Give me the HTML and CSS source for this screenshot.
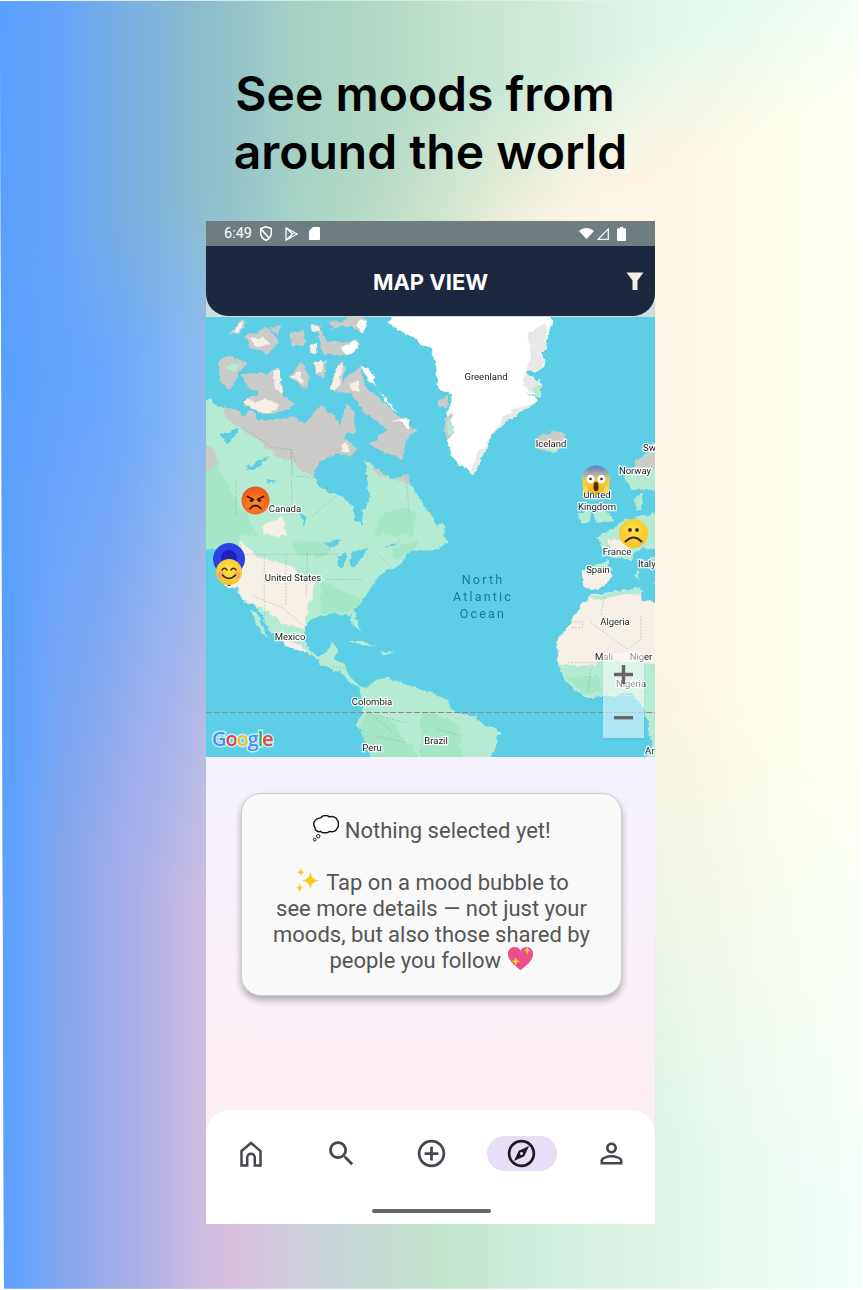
FILE: index.html
```html
<!DOCTYPE html>
<html lang="en">
<head>
<meta charset="utf-8">
<title>See moods from around the world</title>
<link rel="stylesheet" href="styles.css">
</head>
<body>
<main class="stage">
  <h1 class="headline"><span class="line-one">See moods from</span><span class="line-two">around the world</span></h1>
  <section class="phone">
    <div class="status">
      <div class="status-left">
        <span class="clock">6:49</span>
        <svg class="st-shield" viewBox="0 0 12 15"><path d="M6 .7 11.300 2.600V7c0 3.200-2.300 5.900-5.300 7.300C3 12.900.7 10.200.7 7V2.600z M1.500 3.500 9.500 12.500" fill="none" stroke="#fff" stroke-width="1.500"/></svg>
        <svg class="st-play" viewBox="0 0 13 14"><path d="M1 .8 12.200 7 1 13.200z M1 .8 7.500 7 1 13.200 M3 12 7.500 7 9.500 5.400" fill="none" stroke="#fff" stroke-width="1.300" stroke-linejoin="round"/></svg>
        <svg class="st-sd" viewBox="0 0 11 13"><path d="M4 0h6a1 1 0 0 1 1 1v11a1 1 0 0 1-1 1H1a1 1 0 0 1-1-1V4z" fill="#fff"/></svg>
      </div>
      <div class="status-right">
        <svg class="st-wifi" viewBox="0 0 15 11"><path d="M7.500 11 0 3C4.200-1 10.800-1 15 3z" fill="#fff"/></svg>
        <svg class="st-sig" viewBox="0 0 12 12"><path d="M.9 11.300 11.300.9V11.300z" fill="none" stroke="#fff" stroke-width="1.200"/></svg>
        <svg class="st-bat" viewBox="0 0 9 14"><path d="M3 0h3v1.300h2a1 1 0 0 1 1 1V13a1 1 0 0 1-1 1H1a1 1 0 0 1-1-1V2.300a1 1 0 0 1 1-1h2z" fill="#fff"/></svg>
      </div>
    </div>

    <div class="topbar-wrap">
      <header class="topbar">
        <span class="topbar-title">MAP VIEW</span>
        <svg class="filter" viewBox="0 0 18 18"><path d="M0.500 0.500H17.500L11.500 8.500V18H6.500V8.500z" fill="#f3efe6"/></svg>
      </header>
    </div>

    <div class="map">
      <svg class="map-art" viewBox="206 317 449 440" preserveAspectRatio="none">
        <defs>
          <filter id="rough" filterUnits="userSpaceOnUse" x="170" y="280" width="520" height="510">
            <feTurbulence type="fractalNoise" baseFrequency=".11" numOctaves="3" seed="7"/>
            <feDisplacementMap in="SourceGraphic" scale="7" xChannelSelector="R" yChannelSelector="G"/>
          </filter>
          <radialGradient id="angry" cx="50%" cy="62%" r="58%"><stop offset="0" stop-color="#fb8d25"/><stop offset=".75" stop-color="#f4651c"/><stop offset="1" stop-color="#ea5a2a"/></radialGradient>
          <linearGradient id="shock" x1="0" y1="0" x2="0" y2="1"><stop offset="0" stop-color="#5a78d4"/><stop offset=".4" stop-color="#c2c08e"/><stop offset=".55" stop-color="#fcc934"/><stop offset="1" stop-color="#f9b122"/></linearGradient>
          <radialGradient id="yellow" cx="50%" cy="40%" r="65%"><stop offset="0" stop-color="#ffe24c"/><stop offset="1" stop-color="#f9bf1e"/></radialGradient>
        </defs>
        <rect class="sea" x="206" y="317" width="449" height="440"/>

        <g filter="url(#rough)">
        <!-- Arctic Canada + northern North America, zoom 2 coordinates -->
        <g transform="translate(206 316) scale(.3333)">
          <path class="land" d="M-30 250 12 248 32 270 62 276 110 300 150 330 190 350 215 385 250 400 262 415 330 430 325 480 335 505 400 530 440 565 465 630 475 560 490 530 480 460 480 435 530 470 560 490 600 480 620 510 675 600 700 700H-30z"/>
          <path class="land-deep" d="M-30 400 30 420 60 500 120 590 170 700H-30z"/>
          <path class="land-deep" d="M520 600 600 570 675 640V700H500z"/>
          <path class="rock" d="M-30 375 22 395 30 440 12 460-30 440z"/>
          <path class="rock" d="M48 268 100 288 112 300 135 285 170 318 220 310 262 300 300 320 340 270 380 292 402 330 420 268 445 290 450 350 420 355 403 392 420 420 470 432 520 465 560 490 600 480 615 505 580 495 520 480 480 435 395 412 340 440 325 480 290 470 270 440 225 425 190 400 150 370 110 340 60 310z"/>
          <path class="rock" d="M40 130 75 120 125 140 100 170 70 222 40 190z"/>
          <path class="land" d="M60 150 80 140 100 150 80 170z"/>
          <path class="rock" d="M100 180 150 170 185 172 215 150 235 240 265 265 235 285 170 295 115 270 120 250 160 232 130 215z"/>
          <path class="sand" d="M115 256 180 250 215 262 215 282 170 290 130 276z"/>
          <path class="sand" d="M200 165 218 158 232 235 210 215z"/>
          <path class="rock" d="M250 180 280 140 300 150 310 215 280 210z"/>
          <path class="sand" d="M255 178 280 165 295 195 285 205z"/>
          <path class="rock" d="M370 215 400 145 420 150 410 200 460 150 480 210 510 240 580 300 632 340 600 375 590 432 520 400 482 380 510 370 540 340 500 310 470 280 430 230 390 225z"/>
          <path class="sand" d="M372 215 395 150 412 145 400 210 385 222z"/>
          <path class="sand" d="M430 200 455 195 460 225 440 225z"/>
          <path class="snow" d="M460 150 490 155 510 220 540 250 575 290 545 265 500 205z"/>
          <path class="snow" d="M555 315 615 310 605 345 585 320z"/>
          <path class="rock" d="M310 25 340 28 355 70 400 80 450 70 465 100 410 118 350 115 340 60z"/>
          <path class="sand" d="M315 25 335 28 345 50 325 50z"/>
          <path class="snow" d="M405 95 445 72 462 95 420 118z"/>
          <path class="rock" d="M70 60 110 10 125 20 100 50z"/>
          <path class="sand" d="M82 48 108 18 112 28 95 50z"/>
          <path class="rock" d="M115 60 180 35 220 70 190 110 130 100z"/>
          <path class="sand" d="M130 70 170 60 190 85 150 92z"/>
          <path class="rock" d="M250 50 300 40 290 90 260 90z"/>
          <path class="rock" d="M370 40 440 -5 482 10 470 52 430 30z"/>
          <path class="snow" d="M448 25 482 12 470 52z"/>
          <path class="sand" d="M310 90 330 80 335 110 315 110z"/>
          <path class="rock" d="M190 35 225 30 218 60z"/>
          <path class="rock" d="M360 20 400 10 395 35z"/>
          <path class="rock" d="M320 135 360 135 355 185 335 180z"/>
          <path class="sand" d="M322 138 355 135 345 165 332 172z"/>
          <path class="rock" d="M400 375 415 365 455 405 430 418 400 410z"/>
          <path class="sand" d="M408 390 420 378 432 405 410 408z"/>
          <path class="sea" d="M40 355 95 335 85 365 62 382z"/>
          <path class="sea" d="M112 460 185 425 150 460 125 465 132 445z"/>
          <path class="sea" d="M180 495 210 490 190 505z"/>
          <path class="sea" d="M325 480 340 440 370 422 395 412 440 440 475 450 480 470 470 500 495 540 470 590 468 628 448 610 440 570 405 540 370 530 335 505z"/>
          <path class="sea" d="M280 590 305 600 295 625z"/>
          <path class="sand" d="M170 625 230 600 260 700H180z"/>
        </g>

        <!-- United States to Colombia, zoom 4 coordinates -->
        <g transform="translate(206 536) scale(.3333)">
          <path class="land" d="M100 -2H640L640 40 600 50 590 80 530 110 510 130 500 150 470 190 440 225 455 260 462 285 445 270 430 235 350 235 320 245 300 275 295 310 310 345 340 365 385 325 395 340 385 370 420 385 430 420 460 450 480 455 520 425 600 440 700 480V700H515L500 640 470 600 455 570 470 510 460 455 430 440 405 415 350 385 300 350 240 330 225 310 200 290 155 215 122 205 90 160 60 145 100 90z"/>
          <path class="land" d="M630 -80 675 -60 700 -20 722 22 690 36 640 42 620 10z"/>
          <path class="land" d="M680 -30 715 -40 720 -5 695 0z"/>
          <path class="land-deep" d="M505 700 470 600 460 570 490 520 560 560 620 640 660 700z"/>
          <path class="land-deep" d="M260 10 380 25 360 60 270 55z"/>
          <path class="land-deep" d="M345 135 470 190 430 228 345 232z"/>
          <path class="land-deep" d="M560 40 640 10 620 45 570 70z"/>
          <path class="sand" d="M105 15 150 60 190 72 262 90 282 130 330 132 312 190 302 232 300 280 258 270 225 262 190 228 165 215 125 205 92 160 60 145 100 90z"/>
          <path class="sand" d="M225 310 290 330 300 350 240 330z"/>
          <path class="land" d="M135 222 150 225 187 305 165 290z"/>
          <path class="sea" d="M390 60 422 48 412 98 396 90z"/>
          <path class="sea" d="M350 24 410 10 390 30z"/>
          <path class="sea" d="M440 48 482 30 470 68 440 95 430 70z"/>
          <path class="sea" d="M530 40 590 5 560 30z"/>
          <path class="land" d="M425 315 470 315 512 337 470 327z"/>
          <path class="land" d="M525 345 567 350 530 356z"/>
        </g>

        <!-- Greenland, Iceland, Britain, Scandinavia, zoom 3 coordinates -->
        <g transform="translate(431 316) scale(.3333)">
          <path class="snow" d="M-110 -20H350L362 25 345 90 330 110 345 150 310 170 330 200 330 245 290 225 325 255 235 310 180 360 155 420 128 483 115 470 70 430 45 370 50 300 60 240 20 210 15 150 0 100-10 95-60 60-100 42-127 25z"/>
          <path class="ice" d="M115 470 128 483 155 420 180 360 235 310 325 255 270 270 220 300 150 400z"/>
          <path class="ice" d="M290 50 345 20 345 90 325 110 340 150 305 170 325 200 325 240 270 210 300 130z"/>
          <path class="rock" d="M40 310 62 295 70 350 45 370z"/>
          <path class="land" d="M48 320 65 310 68 345 52 355z"/>
          <path class="rock" d="M25 250 52 245 48 275 28 270z"/>
          <path class="sea" d="M290 160 320 175 325 200 285 170z"/>
          <path class="land" d="M305 210 330 205 330 245 310 240z"/>
          <path class="rock" d="M315 370 335 350 400 350 410 385 365 412 320 395z"/>
          <path class="land" d="M335 395 380 395 365 412z"/>
          <path class="land" d="M440 590 480 585 476 622 445 622z"/>
          <path class="land" d="M490 582 520 582 552 612 492 622z"/>
          <path class="land" d="M578 480 640 420 700 335V525L600 520z"/>
          <path class="rock" d="M610 440 700 390V430L640 480z"/>
          <path class="land" d="M612 545 636 528 630 582 616 582z"/>
          <path class="land" d="M520 662 580 610 700 590V700H520z"/>
          <path class="land" d="M-20 590 12 630-20 650z"/>
        </g>

        <!-- Africa, Iberia, Brazil, zoom 5 coordinates -->
        <g transform="translate(431 536) scale(.3333)">
          <path class="land" d="M492 8 560 -30 700 -30V40L620 30 600 72 530 62 515 30z"/>
          <path class="sand" d="M530 10 600 10 590 50 540 50z"/>
          <path class="sand" d="M452 100 530 92 546 122 500 166 456 152z"/>
          <path class="land" d="M452 100 530 76 546 100 470 112z"/>
          <path class="land" d="M655 58 700 80V110z"/>
          <path class="land" d="M610 110 625 110 622 132z"/>
          <path class="land" d="M660 140 700 150V165z"/>
          <path class="sand" d="M376 322 410 270 450 210 480 175 560 165 630 155 636 195 700 205V700H640L665 620 640 520 600 470 520 482 460 486 400 430 385 385z"/>
          <path class="land" d="M385 385 440 395 520 375 700 385V700H640L665 620 640 520 600 470 520 482 460 486 400 430z"/>
          <path class="land" d="M478 180 560 165 630 155 632 175 550 180 485 195z"/>
          <path class="land-deep" d="M410 420 500 420 520 470 460 480z"/>
          <path class="land" d="M-30 475 50 490 70 530 130 540 205 590 190 640 170 700H-30z"/>
          <path class="land-deep" d="M-30 520 80 560 100 700H-30z"/>
        </g>
        </g>

        <!-- Country borders -->
        <g transform="translate(206 316) scale(.3333)">
          <path class="border" d="M110 335 200 395 255 400 262 480 330 485M255 400 258 600M90 490 90 600M400 530 320 600M600 480 610 590M255 400 270 440"/>
        </g>
        <g transform="translate(206 536) scale(.3333)">
          <path class="border" d="M110 55H400M175 55V280M305 55 300 180M140 180 230 215 300 275M380 390 430 400M520 540 600 560M480 520 560 590M190 130H300M240 60V210M360 130H470M520 60 560 100M510 600 600 620"/>
        </g>
        <g transform="translate(431 536) scale(.3333)">
          <path class="border" d="M420 258 455 258 455 275 420 275M480 260 590 340 630 310 630 240M520 180 510 240M410 380 520 380M480 400 470 470M20 580 100 600"/>
        </g>

        <line class="equator" x1="206" y1="712.500" x2="655" y2="712.500"/>

        <text class="lbl" x="486" y="380" text-anchor="middle">Greenland</text>
        <text class="lbl" x="551" y="447" text-anchor="middle">Iceland</text>
        <text class="lbl" x="635" y="474" text-anchor="middle">Norway</text>
        <text class="lbl" x="597" y="498" text-anchor="middle">United</text>
        <text class="lbl" x="597" y="510" text-anchor="middle">Kingdom</text>
        <text class="lbl" x="285" y="512" text-anchor="middle">Canada</text>
        <text class="lbl" x="293" y="581" text-anchor="middle">United States</text>
        <text class="lbl" x="290" y="640" text-anchor="middle">Mexico</text>
        <text class="lbl" x="372" y="705" text-anchor="middle">Colombia</text>
        <text class="lbl" x="372" y="751" text-anchor="middle">Peru</text>
        <text class="lbl" x="436" y="744" text-anchor="middle">Brazil</text>
        <text class="lbl" x="617" y="555" text-anchor="middle">France</text>
        <text class="lbl" x="598" y="573" text-anchor="middle">Spain</text>
        <text class="lbl" x="638" y="567">Italy</text>
        <text class="lbl" x="615" y="625" text-anchor="middle">Algeria</text>
        <text class="lbl" x="604" y="660" text-anchor="middle">Mali</text>
        <text class="lbl" x="641" y="660" text-anchor="middle">Niger</text>
        <text class="lbl" x="631" y="687" text-anchor="middle">Nigeria</text>
        <text class="lbl" x="645" y="754">Ar</text>
        <text class="lbl" x="643" y="451">Sw</text>
        <text class="ocean" x="483" y="584" text-anchor="middle">North</text>
        <text class="ocean" x="483" y="601" text-anchor="middle">Atlantic</text>
        <text class="ocean" x="483" y="618" text-anchor="middle">Ocean</text>

        <text class="google" x="212" y="746"><tspan class="g-blue">G</tspan><tspan class="g-red">o</tspan><tspan class="g-yellow">o</tspan><tspan class="g-blue">g</tspan><tspan class="g-green">l</tspan><tspan class="g-red">e</tspan></text>

        <!-- Mood markers -->
        <circle cx="229" cy="559" r="16" fill="#2f3fe6"/>
        <circle cx="229" cy="558" r="8" fill="#1e22b8"/>
        <circle cx="229" cy="584" r="2" fill="#1e22b8"/>
        <g transform="translate(229 572)">
          <circle r="13" fill="url(#yellow)"/>
          <circle cx="-8" cy="3" r="3.500" fill="#f99a6a" opacity=".7"/>
          <circle cx="8" cy="3" r="3.500" fill="#f99a6a" opacity=".7"/>
          <path d="M-7-2q2.500-3.500 5 0M2-2q2.500-3.500 5 0" fill="none" stroke="#3c2a1a" stroke-width="1.500" stroke-linecap="round"/>
          <path d="M-6.500 3q6.500 7 13 0" fill="none" stroke="#3c2a1a" stroke-width="1.600" stroke-linecap="round"/>
        </g>
        <g transform="translate(255.500 500.500)">
          <circle r="14" fill="url(#angry)"/>
          <path d="M-8-4-2-1M8-4 2-1" stroke="#3a1c10" stroke-width="1.800" stroke-linecap="round"/>
          <ellipse cx="-4" cy="0" rx="1.800" ry="1.600" fill="#3a1c10"/>
          <ellipse cx="4" cy="0" rx="1.800" ry="1.600" fill="#3a1c10"/>
          <path d="M-5.500 8q5.500-6 11 0" fill="none" stroke="#3a1c10" stroke-width="1.800" stroke-linecap="round"/>
        </g>
        <g transform="translate(596 479.500)">
          <circle r="14" fill="url(#shock)"/>
          <ellipse cx="-5.500" cy="-.5" rx="4" ry="4.300" fill="#fff"/>
          <ellipse cx="5.500" cy="-.5" rx="4" ry="4.300" fill="#fff"/>
          <circle cx="-5.500" cy="-.5" r="1.300" fill="#333"/>
          <circle cx="5.500" cy="-.5" r="1.300" fill="#333"/>
          <ellipse cx="0" cy="7" rx="2.500" ry="4.800" fill="#4a2a12"/>
          <path d="M-13 5q3 .5 5 4 1 2 0 5l-2.500 1q-3-4-2.500-10zM13 5q-3 .5-5 4-1 2 0 5l2.500 1q3-4 2.500-10z" fill="#fdd653"/>
        </g>
        <g transform="translate(633.500 533.500)">
          <circle r="14.500" fill="url(#yellow)"/>
          <circle cx="-3.500" cy="-3.500" r="1.900" fill="#3a2a14"/>
          <circle cx="3.500" cy="-3.500" r="1.900" fill="#3a2a14"/>
          <path d="M-8 8q8-8 16 0" fill="none" stroke="#3a2a14" stroke-width="2" stroke-linecap="round"/>
        </g>
      </svg>

      <div class="zoom-ctl">
        <button class="zoom-btn zoom-in" type="button"><svg viewBox="0 0 20 20"><path d="M8.200 0h3.600v8.200H20v3.600h-8.200V20H8.200v-8.200H0V8.200h8.200z"/></svg></button>
        <button class="zoom-btn zoom-out" type="button"><svg viewBox="0 0 20 20"><path d="M0 8.500h20v3.500H0z"/></svg></button>
      </div>
    </div>

    <div class="panel">
      <article class="card">
        <p class="card-line"><svg class="emo" viewBox="0 0 28 28"><path d="M9 3c2-3 7-3 9-1 3-1 7 0 8 3 2 2 2 7 0 9-1 3-5 4-8 3-2 2-7 2-9 0-3 1-6-1-6-4C1 10 1 4 9 3z" fill="#fff" stroke="#111" stroke-width="1.500"/><circle cx="6.500" cy="22" r="1.800" fill="#fff" stroke="#111"/><circle cx="2.800" cy="25.500" r="1.400" fill="#fff" stroke="#111"/></svg> Nothing selected yet!</p>
        <p class="card-body"><svg class="emo" viewBox="0 0 28 28"><path d="M17 5c1 6 3 8 9 9-6 1-8 3-9 9-1-6-3-8-9-9 6-1 8-3 9-9z" fill="#fbc926"/><path d="M7 1c.5 3 1.500 4 4 4.500-2.500.5-3.500 1.500-4 4.500-.5-3-1.500-4-4-4.500C5.500 5 6.500 4 7 1z" fill="#fbc926"/><path d="M6 17c.5 3 1.500 4 4 4.500-2.500.5-3.500 1.500-4 5-.5-3.500-1.500-4.500-4-5C4.500 21 5.500 20 6 17z" fill="#fbc926"/></svg> Tap on a mood bubble to<br>see more details — not just your<br>moods, but also those shared by<br>people you follow <svg class="emo" viewBox="0 0 28 28"><path d="M14 26C6 20 1 15 1 9c0-4 3-7 7-7 3 0 5 1.500 6 4 1-2.500 3-4 6-4 4 0 7 3 7 7 0 6-5 11-13 17z" fill="#ec4f8a"/><path d="M21 1c.5 3 1 4 3.500 4.500C22 6 21.500 7 21 10c-.5-3-1-4-3.500-4.500C20 5 20.500 4 21 1z" fill="#fdd835"/><path d="M9 12c.5 3.500 1.500 4.500 4.500 5-3 .5-4 1.500-4.500 5-.5-3.500-1.500-4.500-4.500-5 3-.5 4-1.500 4.500-5z" fill="#fdd835"/></svg></p>
      </article>
    </div>

    <nav class="tabs">
      <div class="tab-row">
        <span class="tab"><svg class="ic-home" viewBox="0 0 24 26"><path d="M2.500 24.500V10L12 2l9.500 8v14.500H15.800V16.500a3.800 3.800 0 0 0-7.600 0v8z" fill="none" stroke="#49454f" stroke-width="2.500"/></svg></span>
        <span class="tab"><svg class="ic" viewBox="0 0 24 24"><path fill="#49454f" d="M15.500 14h-.79l-.28-.27C15.410 12.590 16 11.110 16 9.500 16 5.910 13.090 3 9.500 3S3 5.910 3 9.500 5.910 16 9.500 16c1.610 0 3.090-.59 4.230-1.570l.27.28v.79l5 4.990L20.490 19l-4.990-5zm-6 0C7.010 14 5 11.990 5 9.500S7.010 5 9.500 5 14 7.010 14 9.500 11.990 14 9.500 14z"/></svg></span>
        <span class="tab"><svg class="ic" viewBox="0 0 24 24"><path fill="#49454f" d="M13 7h-2v4H7v2h4v4h2v-4h4v-2h-4V7zm-1-5C6.480 2 2 6.480 2 12s4.480 10 10 10 10-4.480 10-10S17.520 2 12 2zm0 18c-4.410 0-8-3.590-8-8s3.590-8 8-8 8 3.590 8 8-3.590 8-8 8z"/></svg></span>
        <span class="tab tab-active"><span class="pill"><svg class="ic" viewBox="0 0 24 24"><path fill="#1d1b20" d="M12 2C6.480 2 2 6.480 2 12s4.480 10 10 10 10-4.480 10-10S17.520 2 12 2zm0 18c-4.410 0-8-3.590-8-8s3.590-8 8-8 8 3.590 8 8-3.590 8-8 8zm-5.500-2.500l7.510-3.490L17.500 6.500 9.990 9.990 6.500 17.500zm5.500-6.600c.61 0 1.100.49 1.100 1.100s-.49 1.100-1.100 1.100-1.100-.49-1.100-1.100.49-1.100 1.100-1.100z"/></svg></span></span>
        <span class="tab"><svg class="ic" viewBox="0 0 24 24"><path fill="#49454f" d="M12 5.900c1.160 0 2.100.94 2.100 2.100s-.94 2.100-2.100 2.100S9.900 9.160 9.900 8s.94-2.100 2.100-2.100m0 9c2.970 0 6.100 1.460 6.100 2.100v1.100H5.900V17c0-.64 3.130-2.100 6.100-2.100M12 4C9.790 4 8 5.790 8 8s1.790 4 4 4 4-1.790 4-4-1.790-4-4-4zm0 9c-2.670 0-8 1.340-8 4v3h16v-3c0-2.660-5.330-4-8-4z"/></svg></span>
      </div>
      <div class="home-bar"></div>
    </nav>
  </section>
</main>
</body>
</html>
```
FILE: styles.css
```css
* { box-sizing: border-box; }
html, body { margin: 0; padding: 0; background: #fff; }
body {
  width: 863px;
  height: 1290px;
  overflow: hidden;
  font-family: "Roboto", "Liberation Sans", sans-serif;
}
.stage {
  position: relative;
  height: 1290px;
  padding-top: 65px;
  clip-path: polygon(0 1px, 858px 0, 862px 1288.500px, 4px 1288.500px);
  background: linear-gradient(90deg,
    #5aa0ff 0, #66a6fc 100px, #80b4f8 170px, #90bcea 206px,
    #a8d8c4 300px, #c8e0cc 400px, #eeeed8 500px, #fdf5e6 600px,
    #fff5e4 655px, #fffae8 720px, #feffef 800px, #fefff5 863px);
}
.stage::before, .stage::after {
  content: "";
  position: absolute;
  inset: 0;
}
.stage::before {
  background: linear-gradient(90deg,
    #5aa0ff 0, #64a4f8 60px, #78aee4 120px, #8cbccc 200px, #a6d2c4 300px,
    #b2dac6 380px, #c8e8d4 500px, #dff5e9 650px, #f2fff9 863px);
  -webkit-mask-image: linear-gradient(161deg, #000 250px, transparent 380px);
  mask-image: linear-gradient(161deg, #000 250px, transparent 380px);
}
.stage::after {
  background: linear-gradient(90deg,
    #5aa0ff 0, #62a2fc 20px, #82a6ee 60px, #a8aee8 130px, #ccbce2 200px,
    #d8bfe0 231px, #d0d0dc 300px, #c8d4d8 330px, #c0e4cc 440px, #d0f0e0 550px,
    #ddf3e6 655px, #ecfaf2 750px, #f3fff9 863px);
  -webkit-mask-image: linear-gradient(205deg, transparent 680px, #000 1110px);
  mask-image: linear-gradient(205deg, transparent 680px, #000 1110px);
}
.headline {
  position: relative;
  z-index: 1;
  margin: 0;
  height: 156px;
  display: flex;
  flex-direction: column;
  align-items: center;
  font-family: "Inter", "Liberation Sans", sans-serif;
  font-size: 48px;
  line-height: 58px;
  font-weight: 600;
  color: #000;
}
.line-one { padding-right: 13px; }
.line-two { padding-right: 2px; }
.phone {
  position: relative;
  z-index: 1;
  width: 449px;
  height: 1003px;
  margin-left: 206px;
  display: flex;
  flex-direction: column;
  background: linear-gradient(180deg, #f4f2ff 53%, #fdeff4 88%);
}
.status {
  height: 25px;
  flex: none;
  display: flex;
  justify-content: space-between;
  align-items: center;
  padding: 0 29px 0 18px;
  background: #6f7c80;
  color: #fff;
}
.status-left, .status-right { display: flex; align-items: center; }
.clock { font-size: 14.500px; width: 36px; }
.st-shield { width: 12px; height: 15px; margin-right: 13px; }
.st-play { width: 13px; height: 14px; margin-right: 11px; }
.st-sd { width: 11px; height: 13px; }
.st-wifi { width: 15px; height: 11px; margin-right: 3px; }
.st-sig { width: 12px; height: 12px; margin-right: 8px; }
.st-bat { width: 9px; height: 14px; }
.topbar-wrap { flex: none; height: 71px; background: #cddde2; }
.topbar {
  position: relative;
  height: 70px;
  padding-top: 1px;
  display: flex;
  align-items: center;
  justify-content: center;
  background: #1e2740;
  border-radius: 0 0 22px 22px;
}
.topbar-title {
  font-family: "Inter", "Liberation Sans", sans-serif;
  font-weight: 700;
  font-size: 22px;
  color: #fff;
}
.filter { position: absolute; right: 11px; top: 26px; width: 18px; height: 18px; }
.map { position: relative; height: 440px; flex: none; overflow: hidden; }
.map-art { display: block; width: 449px; height: 440px; }
.sea { fill: #5ccfe6; }
.land { fill: #b6ebd3; }
.land-deep { fill: #a5e6c7; }
.rock { fill: #cbcbc9; }
.sand { fill: #f5efe5; }
.snow { fill: #ffffff; }
.ice { fill: #e8e8e8; }
.border { fill: none; stroke: #7f8a84; stroke-width: 1.500; stroke-dasharray: 6 4; opacity: .7; }
.equator { stroke: #a18383; stroke-width: 1; stroke-dasharray: 6 2; }
.lbl {
  font-family: "Roboto", sans-serif;
  font-size: 9.500px;
  fill: #1c1c1c;
  stroke: #fff;
  stroke-width: 2.500px;
  stroke-opacity: .85;
  paint-order: stroke;
}
.ocean {
  font-family: "Roboto", sans-serif;
  font-size: 12.500px;
  letter-spacing: 2.200px;
  fill: #0f7f99;
}
.google {
  font-family: "Open Sans", sans-serif;
  font-size: 20px;
  font-weight: 600;
  letter-spacing: -1.100px;
  stroke: #fff;
  stroke-width: 3px;
  stroke-opacity: .6;
  paint-order: stroke;
}
.g-blue { fill: #4f8df5; }
.g-red { fill: #e8453c; }
.g-yellow { fill: #f9bb2d; }
.g-green { fill: #3aa757; }
.zoom-ctl {
  position: absolute;
  left: 397px;
  top: 336px;
  width: 41px;
  height: 85px;
  display: flex;
  flex-direction: column;
  border-radius: 2px;
  box-shadow: 0 1px 2px rgba(0,0,0,.08);
}
.zoom-btn {
  flex: 1;
  border: 0;
  padding: 0;
  background: rgba(255,255,255,.5);
  display: flex;
  align-items: center;
  justify-content: center;
}
.zoom-btn svg { width: 19px; height: 19px; fill: #666; }
.zoom-in { border-bottom: 1px solid rgba(255,255,255,.25); }
.panel {
  flex: 1;
  padding: 36px 0 0 35px;
}
.card {
  width: 381px;
  height: 203px;
  padding-top: 24px;
  border: 1px solid #cdcdcd;
  border-radius: 20px;
  background: #f9f9f9;
  box-shadow: 0 4px 7px rgba(0,0,0,.3);
  font-size: 22px;
  line-height: 26px;
  color: #555;
  text-align: center;
}
.card-line, .card-body { margin: 0; }
.card-body { margin-top: 26px; }
.emo { width: 27px; height: 27px; vertical-align: 2px; margin-block: -6px; }
.tabs {
  flex: none;
  height: 114px;
  background: #fff;
  border-radius: 24px 24px 0 0;
  display: flex;
  flex-direction: column;
}
.tab-row {
  display: grid;
  grid-template-columns: repeat(5, 90.2px);
  height: 99px;
  padding-top: 26px;
  align-items: start;
}
.tab { display: flex; justify-content: center; height: 35px; align-items: center; }
.ic { width: 33px; height: 33px; display: block; }
.ic-home { width: 24px; height: 26px; display: block; }
.pill {
  width: 70px;
  height: 35px;
  border-radius: 18px;
  background: #e8def8;
  display: flex;
  align-items: center;
  justify-content: center;
}
.home-bar {
  width: 119px;
  height: 4px;
  margin: 0 0 0 166px;
  border-radius: 2px;
  background: #666;
}
```
